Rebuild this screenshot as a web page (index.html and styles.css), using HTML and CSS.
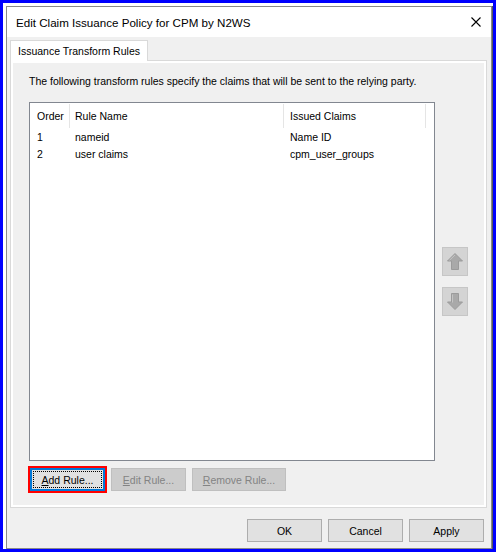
FILE: index.html
```html
<!DOCTYPE html>
<html>
<head>
<meta charset="utf-8">
<link rel="stylesheet" href="styles.css">
</head>
<body>
<div class="screen">
  <div class="backdrop">
    <div class="dialog">
      <div class="titlebar">
        <span class="title">Edit Claim Issuance Policy for CPM by N2WS</span>
        <svg class="close" width="10" height="10" viewBox="0 0 10 10"><path d="M0.5 0.5 L9.5 9.5 M9.5 0.5 L0.5 9.5" stroke="#000" stroke-width="1.1" fill="none"/></svg>
      </div>
      <div class="body">
        <div class="tabs">
          <div class="tab">Issuance Transform Rules</div>
        </div>
        <div class="panel">
          <p class="desc">The following transform rules specify the claims that will be sent to the relying party.</p>
          <div class="list-area">
            <div class="list">
              <div class="row head">
                <div class="cell c1 sep">Order</div>
                <div class="cell c2 sep">Rule Name</div>
                <div class="cell c3 sep">Issued Claims</div>
              </div>
              <div class="row">
                <div class="cell c1">1</div>
                <div class="cell c2">nameid</div>
                <div class="cell c3">Name ID</div>
              </div>
              <div class="row">
                <div class="cell c1">2</div>
                <div class="cell c2">user claims</div>
                <div class="cell c3">cpm_user_groups</div>
              </div>
            </div>
            <div class="arrows">
              <div class="arrow-btn">
                <svg width="16" height="17" viewBox="0 0 16 17"><path d="M8 0.5 L15.5 8 L11.5 8 L11.5 16.5 L4.5 16.5 L4.5 8 L0.5 8 Z" fill="#a9a9a9" stroke="#9b9b9b" stroke-width="1"/><path d="M8 2 L2.5 7.3" stroke="#c4c4c4" stroke-width="1"/></svg>
              </div>
              <div class="arrow-btn">
                <svg width="16" height="17" viewBox="0 0 16 17"><path d="M8 16.5 L15.5 9 L11.5 9 L11.5 0.5 L4.5 0.5 L4.5 9 L0.5 9 Z" fill="#a9a9a9" stroke="#9b9b9b" stroke-width="1"/><path d="M5.5 1.5 L5.5 9.5" stroke="#c4c4c4" stroke-width="1"/></svg>
              </div>
            </div>
          </div>
          <div class="rule-buttons">
            <div class="btn focus"><span class="focus-ring"><u>A</u>dd Rule...</span></div>
            <div class="btn disabled"><u>E</u>dit Rule...</div>
            <div class="btn disabled wide"><u>R</u>emove Rule...</div>
          </div>
        </div>
        <div class="footer">
          <div class="btn">OK</div>
          <div class="btn">Cancel</div>
          <div class="btn">Apply</div>
        </div>
      </div>
    </div>
  </div>
</div>
</body>
</html>
```
FILE: styles.css
```css
* { box-sizing: border-box; }
html, body { margin: 0; padding: 0; }
body {
  width: 496px;
  height: 552px;
  overflow: hidden;
  background: #0000ff;
  font-family: "Liberation Sans", Arial, sans-serif;
  font-size: 10.5px;
  color: #000;
}
.screen {
  padding: 3px;
  height: 552px;
}
.backdrop {
  background: #ffffff;
  padding: 3px 0 0 3px;
  height: 546px;
}
.dialog {
  width: 486px;
  height: 543px;
  border: 1px solid #8a8a8a;
  box-shadow: 1px 0 0 #5a5a5a;
  display: flex;
  flex-direction: column;
  background: #f0f0f0;
}
.titlebar {
  height: 30px;
  background: #ffffff;
  display: flex;
  align-items: center;
  justify-content: space-between;
  padding: 0 10px 0 9px;
  flex: none;
}
.title { font-size: 11.6px; }
.body {
  flex: 1;
  display: flex;
  flex-direction: column;
  padding: 3px 4px 4px 3px;
}
.tabs {
  display: flex;
  height: 20px;
  position: relative;
  z-index: 1;
}
.tab {
  width: 138px;
  height: 21px;
  background: #ffffff;
  border: 1px solid #d9d9d9;
  border-bottom: none;
  padding: 0 0 0 7px;
  line-height: 21px;
  white-space: nowrap;
}
.panel {
  height: 448px;
  border: 1px solid #d9d9d9;
  box-shadow: inset 0 0 0 2px #ffffff;
  padding: 12px 0 0 18px;
  display: flex;
  flex-direction: column;
}
.desc {
  margin: 0;
  height: 16px;
  line-height: 16px;
  white-space: nowrap;
}
.list-area {
  margin-top: 13px;
  display: flex;
  align-items: center;
}
.list {
  width: 406px;
  height: 359px;
  background: #ffffff;
  border: 1px solid #828790;
  flex: none;
}
.row {
  display: grid;
  grid-template-columns: 40px 214px 142px;
  height: 17px;
  line-height: 18px;
}
.row.head {
  height: 25px;
  line-height: 25px;
}
.cell { padding-left: 7px; white-space: nowrap; }
.c2 { padding-left: 5px; }
.c3 { padding-left: 6px; }
.head .sep {
  border-right: 1px solid #e5e5e5;
  height: 24px;
  margin-top: 1px;
  line-height: 24px;
}
.arrows {
  margin-left: 7px;
  display: flex;
  flex-direction: column;
  gap: 11px;
}
.arrow-btn {
  width: 26px;
  height: 29px;
  background: #d4d4d4;
  border: 1px solid #c6c6c6;
  display: flex;
  align-items: center;
  justify-content: center;
}
.rule-buttons {
  display: flex;
  gap: 6px;
  margin-top: 7px;
  padding-left: 1px;
}
.btn {
  width: 75px;
  height: 23px;
  background: #e1e1e1;
  border: 1px solid #adadad;
  display: flex;
  align-items: center;
  justify-content: center;
  white-space: nowrap;
}
.btn u { text-decoration: underline; }
.btn.disabled {
  background: #cccccc;
  border-color: #bfbfbf;
  color: #838383;
}
.btn.wide { width: 94px; }
.btn.focus {
  border: 1px solid #0078d7;
  box-shadow: inset 0 0 0 1px #0078d7;
  outline: 2px solid #ff0000;
  outline-offset: 0;
  padding: 2px;
}
.focus-ring {
  flex: 1;
  align-self: stretch;
  border: 1px dotted #000;
  display: flex;
  align-items: center;
  justify-content: center;
}
.footer {
  display: flex;
  justify-content: flex-end;
  gap: 6px;
  margin-top: 11px;
  padding-right: 3px;
}
```
